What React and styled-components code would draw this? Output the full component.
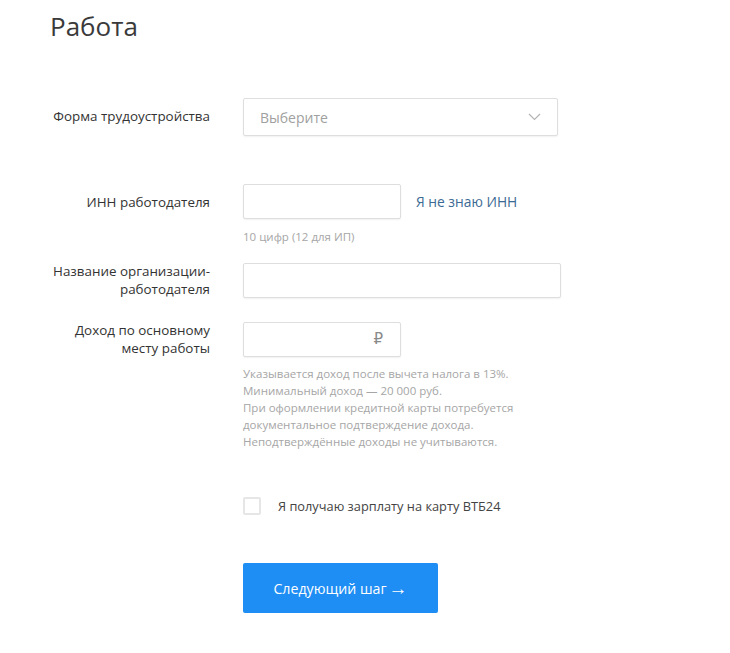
import React from "react";
import styled, { createGlobalStyle } from "styled-components";

const GlobalStyle = createGlobalStyle`
  body {
    margin: 0;
    background: #fff;
    font-family: "Open Sans", "Liberation Sans", sans-serif;
    color: #333;
  }
`;

const Page = styled.div`
  width: 730px;
  height: 653px;
  padding: 11px 0 0 50px;
  box-sizing: border-box;
`;

const Title = styled.h1`
  margin: 0;
  font-size: 26px;
  line-height: 30px;
  font-weight: 400;
  color: #3a3a3a;
`;

const Row = styled.div`
  display: grid;
  grid-template-columns: 160px auto;
  column-gap: 33px;
  row-gap: ${(p) => p.$hintGap || 11}px;
  align-items: center;
  margin-top: ${(p) => p.$top}px;
`;

const Label = styled.div`
  text-align: right;
  font-size: 13.4px;
  line-height: 18px;
  color: #333;
  margin-top: ${(p) => p.$shift || 0}px;
`;

const Field = styled.div`
  display: flex;
  align-items: center;
  gap: 15px;
`;

const Box = styled.div`
  width: ${(p) => p.$w}px;
  height: ${(p) => p.$h || 35}px;
  box-sizing: border-box;
  border: 1px solid #dedede;
  box-shadow: 0 1px 2px rgba(0, 0, 0, 0.06);
  border-radius: 2px;
  background: #fff;
  display: flex;
  align-items: center;
  justify-content: space-between;
  padding: 0 16px;
`;

const Placeholder = styled.span`
  font-size: 14px;
  color: #a0a0a0;
`;

const Ruble = styled.span`
  margin-left: auto;
  margin-right: 1px;
  font-size: 15px;
  color: #8a8a8a;
  font-family: "DejaVu Sans", sans-serif;
`;

const TextLink = styled.a`
  font-size: 13.8px;
  color: #3b6a94;
  text-decoration: none;
`;

const Hint = styled.div`
  grid-column: 2;
  font-size: 11.5px;
  line-height: 17px;
  color: #a6a6a6;
`;

const CheckRow = styled.label`
  display: flex;
  align-items: center;
  gap: 17px;
  margin: 47px 0 0 193px;
  font-size: 12.8px;
  color: #444;
`;

const CheckBox = styled.span`
  width: 18px;
  height: 18px;
  box-sizing: border-box;
  border: 2px solid #e6e6e6;
  border-radius: 2px;
`;

const Button = styled.button`
  display: block;
  margin: 48px 0 0 193px;
  width: 195px;
  height: 50px;
  border: 0;
  border-radius: 2px;
  background: #1e8df4;
  color: #fff;
  font-family: "Open Sans", "Liberation Sans", sans-serif;
  font-size: 14.2px;
`;

const Arrow = styled.span`
  font-size: 19px;
  line-height: 0;
  margin-left: 2px;
  position: relative;
  top: 1px;
`;

const Chevron = () => (
  <svg width="13" height="8" viewBox="0 0 13 8" fill="none">
    <path d="M1 1l5.5 5.5L12 1" stroke="#b5b5b5" strokeWidth="1.2" />
  </svg>
);

export default function App() {
  return (
    <>
      <GlobalStyle />
      <Page>
        <Title>Работа</Title>

        <Row $top={57}>
          <Label $shift={-3}>Форма трудоустройства</Label>
          <Box $w={315} $h={38}>
            <Placeholder>Выберите</Placeholder>
            <Chevron />
          </Box>
        </Row>

        <Row $top={48} $hintGap={9}>
          <Label>ИНН работодателя</Label>
          <Field>
            <Box $w={158} />
            <TextLink href="#">Я не знаю ИНН</TextLink>
          </Field>
          <Hint>10 цифр (12 для ИП)</Hint>
        </Row>

        <Row $top={17}>
          <Label>
            Название организации-
            <br />
            работодателя
          </Label>
          <Box $w={318} />
        </Row>

        <Row $top={23} $hintGap={8}>
          <Label>
            Доход по основному
            <br />
            месту работы
          </Label>
          <Box $w={158}>
            <Ruble>₽</Ruble>
          </Box>
          <Hint>
            Указывается доход после вычета налога в 13%.
            <br />
            Минимальный доход — 20 000 руб.
            <br />
            При оформлении кредитной карты потребуется
            <br />
            документальное подтверждение дохода.
            <br />
            Неподтверждённые доходы не учитываются.
          </Hint>
        </Row>

        <CheckRow>
          <CheckBox />
          Я получаю зарплату на карту ВТБ24
        </CheckRow>

        <Button>
          Следующий шаг<Arrow>→</Arrow>
        </Button>
      </Page>
    </>
  );
}
